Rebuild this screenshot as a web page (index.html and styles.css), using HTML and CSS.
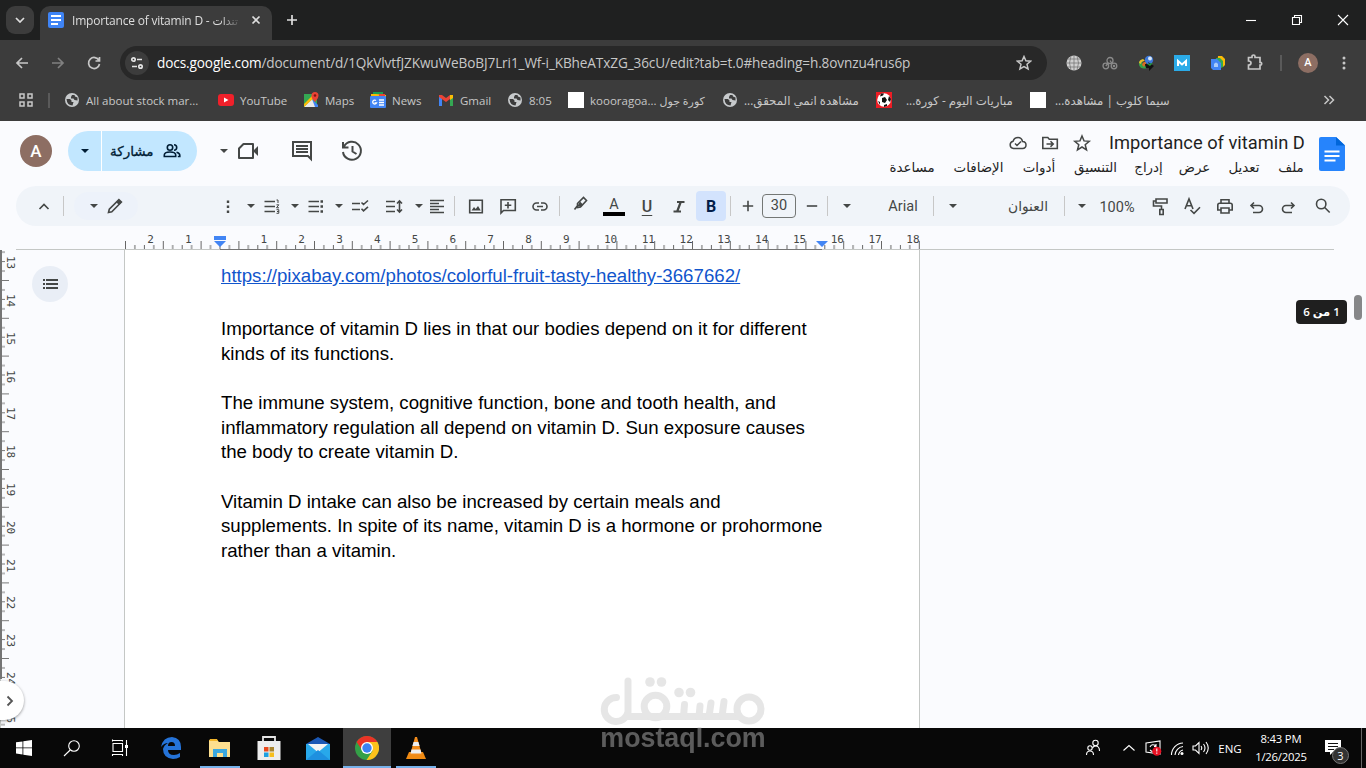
FILE: index.html
```html
<!DOCTYPE html>
<html lang="ar">
  <head>
    <meta charset="utf-8">
    <title>Importance of vitamin D</title>
    <link rel="stylesheet" href="styles.css">
  </head>

  <body>
    <!-- shared icons -->
    <svg class="defs" width="0" height="0">
      <symbol id="caret" viewBox="0 0 8 4"><path d="M0 0h8L4 4z" fill="currentColor"/></symbol>
      <symbol id="globe" viewBox="0 0 16 16"><circle cx="8" cy="8" r="7" fill="#c7cacc"/><path d="M2.500 7h3.500l1.500 1.500v1.500h2l-1 3.500Q3 13.500 2.500 7zM8 3h2.500l.5 1.500 2.500 1v3l-3-.5-1-1.500-2.500 0V5z" fill="#3c3c3c"/></symbol>
    </svg>

    <div class="tabstrip">
      <div class="tab-search"><svg width="10" height="6" viewBox="0 0 10 6"><path d="M1 1l4 4 4-4" class="s2"/></svg></div>
      <div class="tab">
        <svg width="16" height="16" viewBox="0 0 16 16"><rect width="16" height="16" rx="2" fill="#3f84f5"/><path d="M3 4h10M3 8h10M3 12h7" stroke="#fff" stroke-width="2"/></svg>
        <div class="tab-title">Importance of vitamin D - <span>تندات</span></div>
        <svg width="10" height="10" viewBox="0 0 10 10"><path d="M1.500 1.500l7 7M8.500 1.500l-7 7" class="s2"/></svg>
      </div>
      <svg class="new-tab" width="12" height="12" viewBox="0 0 12 12"><path d="M6 1v10M1 6h10" class="s2"/></svg>
      <div class="window-buttons">
        <svg width="46" height="40" viewBox="0 0 46 40"><path d="M18 20.500h10" class="s1"/></svg>
        <svg width="46" height="40" viewBox="0 0 46 40"><path d="M18.500 17.500h7v7h-7zM20.500 17v-1.500h7v7h-1.500" class="s1"/></svg>
        <svg width="46" height="40" viewBox="0 0 46 40"><path d="M18 15l10 10M28 15l-10 10" class="s1"/></svg>
      </div>
    </div>

    <div class="navbar">
      <svg class="m14" width="16" height="16" viewBox="0 0 16 16"><path d="M14 8H3M8 3L3 8l5 5" class="s2"/></svg>
      <svg class="m20 dim" width="16" height="16" viewBox="0 0 16 16"><path d="M2 8h11M8 3l5 5-5 5" class="s2"/></svg>
      <svg class="m20" width="16" height="16" viewBox="0 0 16 16"><path d="M13 5.500A5.500 5.500 0 1 0 13.500 9M13.500 2v4h-4" class="s2"/></svg>
      <div class="address">
        <div class="site-info"><svg width="14" height="14" viewBox="0 0 14 14"><path d="M7 3.500h5M2 10.500h5" class="s2"/><circle cx="3.500" cy="3.500" r="1.700" class="s2"/><circle cx="10.500" cy="10.500" r="1.700" class="s2"/></svg></div>
        <div class="url"><b>docs.google.com</b>/document/d/1QkVlvtfJZKwuWeBoBJ7Lri1_Wf-i_KBheATxZG_36cU/edit?tab=t.0#heading=h.8ovnzu4rus6p</div>
        <svg width="16" height="16" viewBox="0 0 16 16"><path d="M8 1.500l1.900 4.300 4.700.4-3.600 3.100 1.100 4.600L8 11.500l-4.100 2.400L5 9.300 1.400 6.200l4.700-.4z" class="s15"/></svg>
      </div>
      <div class="extensions">
        <svg width="16" height="16" viewBox="0 0 16 16"><circle cx="8" cy="8" r="7.500" fill="#d0d0d0"/><path d="M8 0v16M0 8h16M1.500 4h13M1.500 12h13M5 1q-3 7 0 14M11 1q3 7 0 14" fill="none" stroke="#777" stroke-width=".8"/></svg>
        <svg width="16" height="16" viewBox="0 0 16 16" fill="none" stroke="#8a8a8a" stroke-width="1.300"><circle cx="3.800" cy="11" r="2.800"/><circle cx="12" cy="11" r="2.800"/><circle cx="12" cy="11" r=".6"/><circle cx="8" cy="5.500" r="3"/><path d="M8 5.500l2 3M3.800 11l2.500-3"/></svg>
        <svg width="16" height="16" viewBox="0 0 16 16"><path d="M6 4Q0 5 1 10q2 5 8 3l-2-3q-4 0-2-4z" fill="#35a047"/><path d="M5 4q-4 1-4 4l2 1q0-3 4-3z" fill="#e8b82a"/><path d="M4 10q1-4 5-3l-3 5z" fill="#d66b24"/><circle cx="11" cy="5" r="4.200" fill="#3c78d8"/><circle cx="12" cy="3.500" r="2" fill="#d7e5f5"/><path d="M7 9h4l-1-2 6 4-5 5v-3H8z" fill="#111"/><path d="M9 9l6-1-3 3z" fill="#24963f"/></svg>
        <svg width="16" height="16" viewBox="0 0 16 16"><rect width="16" height="16" fill="#2babe8"/><path d="M4 11V6l4 3.500L12 6v5" fill="none" stroke="#fff" stroke-width="2"/></svg>
        <svg width="16" height="16" viewBox="0 0 16 16"><path d="M8 1h4l3 3v6l-2 2H7z" fill="#fbbc05"/><path d="M6 3h4l3 3v6l-2 1H5z" fill="#34a853"/><path d="M1 4h6l4 4v7H3l-2-2z" fill="#4285f4"/><path d="M4 9q2-3 4 0v3H4z" fill="#a9cbfa"/></svg>
        <svg width="18" height="18" viewBox="0 0 18 18"><path d="M2.500 4.500H6V3.500a1.500 1.500 0 0 1 3 0v1h5v5h1a1.500 1.500 0 0 1 0 2.500h-1v4H2.500v-4q2.500 0 2.500-2t-2.500-2z" fill="none" stroke="#c7c7c7" stroke-width="1.700" transform="translate(0 -1)"/></svg>
      </div>
      <i class="nav-divider"></i>
      <div class="avatar small">A</div>
      <svg class="kebab" width="4" height="16" viewBox="0 0 4 16" fill="#c7c7c7"><circle cx="2" cy="3" r="1.500"/><circle cx="2" cy="8" r="1.500"/><circle cx="2" cy="13" r="1.500"/></svg>
    </div>

    <div class="bookmarks">
      <svg class="apps" width="16" height="16" viewBox="0 0 16 16"><path d="M2 2h4v4H2zM10 2h4v4h-4zM2 10h4v4H2zM10 10h4v4h-4z" class="s15"/></svg>
      <i class="bar"></i>
      <div class="bm b1"><svg width="16" height="16"><use href="#globe"/></svg><span>All about stock mar...</span></div>
      <div class="bm b2"><svg width="16" height="16" viewBox="0 0 16 16"><rect y="2" width="16" height="12" rx="3" fill="#f0202a"/><path d="M6 5.500v5L10.500 8z" fill="#fff"/></svg><span>YouTube</span></div>
      <div class="bm b3"><svg width="16" height="16" viewBox="0 0 16 16"><path d="M1 2h13v13H1z" fill="#34a853"/><path d="M1 15L9 7l5 8z" fill="#e9e9e9"/><path d="M9 7l6 6v2h-3z" fill="#4285f4"/><path d="M1 12v3l11-10-2-2z" fill="#fbbc05"/><path d="M12 10Q8 6 8.500 3.500a3.500 3.500 0 0 1 7 0Q15.500 6 12 10z" fill="#ea4335"/><circle cx="12" cy="3.500" r="1.300" fill="#811411"/></svg><span>Maps</span></div>
      <div class="bm b4"><svg width="16" height="16" viewBox="0 0 16 16"><path d="M3 0h10v5H3z" fill="#1b9e54"/><path d="M1 2h5l10 1v4H1z" fill="#fbbc05"/><path d="M9 2h6v3H9z" fill="#ea4335"/><rect y="4" width="16" height="12" rx="1" fill="#4285f4"/><path d="M6 8.500A2 2 0 1 0 6.500 11H4.500M9 8h5M9 10.500h5M9 13h5" fill="none" stroke="#fff" stroke-width="1.300"/></svg><span>News</span></div>
      <div class="bm b5"><svg width="16" height="16" viewBox="0 0 16 16"><path d="M1 4h3v10H1z" fill="#4285f4"/><path d="M12 4h3v10h-3z" fill="#34a853"/><path d="M12 3h3v3l-3 2z" fill="#fbbc05"/><path d="M1 3l3 0 4 3 4-3v4L8 10 1 5z" fill="#ea4335"/></svg><span>Gmail</span></div>
      <div class="bm b6"><svg width="16" height="16"><use href="#globe"/></svg><span>8:05</span></div>
      <div class="bm b7"><i class="blank"></i><span>koooragoa... <em>كورة جول</em></span></div>
      <div class="bm b8"><svg width="16" height="16"><use href="#globe"/></svg><span class="ar" dir="rtl">مشاهدة انمي المحقق...</span></div>
      <div class="bm b9"><svg width="16" height="16" viewBox="0 0 16 16"><path d="M0 0h16v16H0z" fill="#ed1c24"/><circle cx="8" cy="8" r="6.800" fill="#fff"/><path d="M6 6l3-1 2 3-2 3-3-1zM5 1.500l3 0-1 2-3 1zM13 4l2 3-1 3-2-2zM2 9l2 1 0 3zM8 13l3-1 0 2-3 1z" fill="#111"/></svg><span class="ar" dir="rtl">مباريات اليوم - كورة...</span></div>
      <div class="bm b10"><i class="blank"></i><span class="ar" dir="rtl">سيما كلوب | مشاهدة...</span></div>
      <svg class="more" width="12" height="10" viewBox="0 0 12 10"><path d="M1.500 1l4 4-4 4M6.500 1l4 4-4 4" class="s15"/></svg>
    </div>

    <div class="docs">
      <div class="docs-header">
        <div class="avatar">A</div>
        <div class="share">
          <div class="share-more"><svg width="8" height="4"><use href="#caret"/></svg></div>
          <div class="share-main">
            <span>مشاركة</span>
            <svg width="20" height="20" viewBox="0 0 20 20" fill="none" stroke="currentColor" stroke-width="1.600"><circle cx="8" cy="6.500" r="2.700"/><path d="M2.300 15.500v-1.500q0-3 5.700-3t5.700 3v1.500zM12 3.800a2.700 2.700 0 0 1 0 5.400M14.500 11.300q3.300.8 3.300 3v1.200h-2"/></svg>
          </div>
        </div>
        <svg class="m23" width="8" height="4"><use href="#caret"/></svg>
        <svg class="m8" width="24" height="24" viewBox="0 0 24 24"><path d="M7.500 5H17v14H3V9.500z" fill="none" stroke="currentColor" stroke-width="2" stroke-linejoin="round"/><path d="M17 12l5-5v10z" fill="currentColor"/></svg>
        <svg class="m30" width="24" height="24" viewBox="0 0 24 24"><path d="M3 3h18v17l-3-3H3zM6 7h12M6 10h12M6 13h12" fill="none" stroke="currentColor" stroke-width="2"/></svg>
        <svg class="m26" width="24" height="24" viewBox="0 0 24 24"><path d="M4 7.500a9 9 0 1 1-1 5.500M3 3v5.500h5.500M12.500 7v5.500l4 2.500" fill="none" stroke="currentColor" stroke-width="2"/></svg>

        <div class="doc-info">
          <div class="doc-name">
            <svg width="20" height="20" viewBox="0 0 20 20"><path d="M5.500 15.500a3.700 3.700 0 0 1-.4-7.300Q6.300 4.500 10 4.500t4.500 4q3.500.2 3.500 3.500t-3.500 3.500zM7 10.500l2 2 4-4" fill="none" stroke="currentColor" stroke-width="1.500"/></svg>
            <svg width="20" height="20" viewBox="0 0 20 20"><path d="M2.800 15.500v-11h5l1.500 1.700h8v9.300zM6.500 11h6M10.500 8.300l2.700 2.700-2.700 2.700" fill="none" stroke="currentColor" stroke-width="1.600"/></svg>
            <svg width="20" height="20" viewBox="0 0 20 20"><path d="M10 3l2 4.900 5.200.4-4 3.400 1.300 5.100L10 14l-4.500 2.800 1.300-5.100-4-3.400L8 7.900z" fill="none" stroke="currentColor" stroke-width="1.500"/></svg>
            <h1>Importance of vitamin D</h1>
          </div>
          <div class="menus" dir="rtl">
            <span class="w26">ملف</span>
            <span class="w34">تعديل</span>
            <span class="w31">عرض</span>
            <span class="w27">إدراج</span>
            <span class="w45">التنسيق</span>
            <span class="w34">أدوات</span>
            <span class="w53">الإضافات</span>
            <span class="w46">مساعدة</span>
          </div>
        </div>
        <svg class="docs-logo" width="26" height="34" viewBox="0 0 26 34"><path d="M2 0h15l9 8.500V32a2 2 0 0 1-2 2H2a2 2 0 0 1-2-2V2a2 2 0 0 1 2-2z" fill="#2684fc"/><path d="M17 0l9 8.500h-9z" fill="#0066da"/><path d="M5.500 14.500h15M5.500 19h15M5.500 23.500h11" stroke="#fff" stroke-width="1.800"/></svg>
      </div>

      <div class="toolbar">
        <svg class="m18" width="20" height="20" viewBox="0 0 20 20"><path d="M5.500 13l4.500-4.500 4.500 4.500" class="t2"/></svg>
        <i class="sep m9"></i>
        <div class="mode m10">
          <svg width="8" height="4"><use href="#caret"/></svg>
          <svg class="m7" width="20" height="20" viewBox="0 0 20 20"><path d="M3.500 16.500l.8-3.300 9.600-9.600 2.500 2.500-9.600 9.600z" class="t2"/><path d="M11 6l2.500-2.500 3 3L14 9z" fill="currentColor"/></svg>
        </div>
        <svg class="m80" width="20" height="20" viewBox="0 0 20 20" fill="currentColor"><path d="M8.800 4.500h2.400v2.400H8.800zM8.800 9.500h2.400v2.400H8.800zM8.800 14.500h2.400v2.400H8.800z"/></svg>
        <svg class="m9" width="8" height="4"><use href="#caret"/></svg>
        <svg class="m7" width="20" height="20" viewBox="0 0 20 20"><path d="M2.500 5.500H13M2.500 10.500H13M2.500 15.500H13" class="t2"/><path d="M14.500 4h1.500v3M14.500 8.800h2.300l-2.300 3h2.500M14.500 13.700h2.300v3.600h-2.300M15 15.500h1.800" class="t1"/></svg>
        <svg class="m9" width="8" height="4"><use href="#caret"/></svg>
        <svg class="m7" width="20" height="20" viewBox="0 0 20 20"><path d="M2.500 5.500H13M2.500 10.500H13M2.500 15.500H13" class="t2"/><path d="M14.500 4.200H17v2.500h-2.500zM14.500 9.200H17v2.500h-2.500zM14.500 14.200H17v2.500h-2.500z" fill="currentColor"/></svg>
        <svg class="m9" width="8" height="4"><use href="#caret"/></svg>
        <svg class="m7" width="20" height="20" viewBox="0 0 20 20"><path d="M2 7.500h8M2 13.500h8M11.500 6.500l2 2 4.500-4M11.500 12.800l2 2 4.500-4" class="t2"/></svg>
        <svg class="m14" width="20" height="20" viewBox="0 0 20 20"><path d="M2 5.500h9M2 10.500h9M2 15.500h9M15.500 6v9M13 7.500L15.500 5 18 7.500M13 13.500l2.500 2.500 2.500-2.500" class="t2"/></svg>
        <svg class="m11" width="8" height="4"><use href="#caret"/></svg>
        <svg class="m4" width="20" height="20" viewBox="0 0 20 20"><path d="M3 4.500h14M3 7.500h9M3 10.500h14M3 13.500h9M3 16.500h14" class="t2"/></svg>
        <i class="sep m7"></i>
        <svg class="m11" width="20" height="20" viewBox="0 0 20 20"><path d="M3.700 4.200h12.600v12.600H3.700z" class="t2"/><path d="M5.500 14.500l2.500-3.500 1.700 2 2.300-3 2.800 4.500z" fill="currentColor"/></svg>
        <svg class="m12" width="20" height="20" viewBox="0 0 20 20"><path d="M3 17V3.800h14.300v10.700H5.500zM10 6v6.500M6.800 9.200h6.500" class="t2"/></svg>
        <svg class="m12" width="20" height="20" viewBox="0 0 20 20"><path d="M9 14H6.500a3.500 3.500 0 0 1 0-7H9M11 7h2.500a3.500 3.500 0 0 1 0 7H11M7 10.500h6" class="t2"/></svg>
        <i class="sep m9"></i>
        <svg class="m10 lift" width="20" height="20" viewBox="0 0 20 20"><path d="M7.500 9.500l6-6 3 3-6 6.500-3 .5zM8 11l-3.500 4.500" class="t2"/><path d="M10 7.500l3 3-2.500 2.500-3-1z" fill="currentColor"/></svg>
        <span class="text-color m13">A</span>
        <span class="under m12">U</span>
        <svg class="m12" width="20" height="20" viewBox="0 0 20 20"><path d="M8 6h7.500M4.500 15.500H12M11.700 6l-3.500 9.500" fill="none" stroke="currentColor" stroke-width="2.200"/></svg>
        <span class="bold m7">B</span>
        <i class="sep m4"></i>
        <svg class="m7" width="20" height="20" viewBox="0 0 20 20"><path d="M10 4.800v10.400M4.800 10h10.400" class="t2"/></svg>
        <span class="font-size m4">30</span>
        <svg class="m6" width="20" height="20" viewBox="0 0 20 20"><path d="M4.800 10h10.400" class="t2"/></svg>
        <i class="sep m5"></i>
        <svg class="m15" width="8" height="4"><use href="#caret"/></svg>
        <span class="font-name m29">Arial</span>
        <i class="sep m7"></i>
        <svg class="m15" width="8" height="4"><use href="#caret"/></svg>
        <span class="style-name m46">العنوان</span>
        <i class="sep m11"></i>
        <svg class="m13" width="8" height="4"><use href="#caret"/></svg>
        <span class="zoom m9">100%</span>
        <svg class="m11" width="20" height="20" viewBox="0 0 20 20"><path d="M6 3h11v4H6zM6 5H3.500v5H11.500v3M9.800 13.500h3.400v5H9.800z" class="t2"/></svg>
        <svg class="m12" width="20" height="20" viewBox="0 0 20 20"><path d="M3 13l4-10 4 10M4.500 9.700h5M8.500 14l3.500 3.300 6-6" class="t2"/></svg>
        <svg class="m13" width="20" height="20" viewBox="0 0 20 20"><path d="M6 7V3.800h8V7M5.500 14H2.800V9q0-1.800 1.800-1.800h10.800q1.800 0 1.800 1.800v5h-2.700M6 12h8v5H6z" class="t2"/></svg>
        <svg class="m12" width="20" height="20" viewBox="0 0 20 20"><path d="M7 5.500L4 8.500l3 3M4.500 8.500h7.500a3.500 3.500 0 0 1 0 7H6" class="t2" transform="translate(0 1)"/></svg>
        <svg class="m11" width="20" height="20" viewBox="0 0 20 20"><path d="M13 5.500l3 3-3 3M15.500 8.500H8a3.500 3.500 0 0 0 0 7h6" class="t2" transform="translate(0 1)"/></svg>
        <svg class="m15" width="20" height="20" viewBox="0 0 20 20"><circle cx="8.200" cy="8" r="4.700" class="t2"/><path d="M11.700 11.500l5 5" class="t2"/></svg>
      </div>

      <div class="ruler">
        <div class="ruler-labels">
          <span>2</span><span>1</span><span></span><span>1</span><span>2</span><span>3</span><span>4</span><span>5</span><span>6</span><span>7</span><span>8</span><span>9</span><span class="two">10</span><span class="two">11</span><span class="two">12</span><span class="two">13</span><span class="two">14</span><span class="two">15</span><span class="two">16</span><span class="two">17</span><span class="two">18</span>
        </div>
        <svg class="ruler-ticks" width="1366" height="25" viewBox="0 0 1366 25">
          <defs>
            <pattern id="hticks" x="125" y="0" width="37.800" height="25" patternUnits="userSpaceOnUse">
              <path d="M.5 15v9M9.900 19v5M19.400 19v5M28.800 19v5" stroke="#666" stroke-width="1"/>
            </pattern>
          </defs>
          <rect x="125" y="0" width="795" height="25" fill="url(#hticks)"/>
          <path d="M16 23.500h1318" stroke="#c4c7c5"/>
          <path d="M220 23.500h602" stroke="#757575"/>
          <path d="M214 10h12v4h-12zM214 15h12l-6 6zM816 15h12l-6 6z" fill="#4285f4"/>
        </svg>
      </div>

      <div class="editor">
        <div class="vruler">
          <svg width="10" height="480" viewBox="0 0 10 480">
            <defs>
              <pattern id="vticks" x="0" y="30" width="10" height="37.800" patternUnits="userSpaceOnUse">
                <path d="M0 .5h9M0 9.900h5M0 19.400h5M0 28.800h5" stroke="#777" stroke-width="1"/>
              </pattern>
            </defs>
            <rect width="10" height="480" fill="url(#vticks)"/>
            <path d="M1 0v429" stroke="#757575" stroke-width="2"/>
            <path d="M.5 429v51" stroke="#c4c7c5"/>
          </svg>
          <div class="vlabels">
            <span>13</span><span>14</span><span>15</span><span>16</span><span>17</span><span>18</span><span>19</span><span>20</span><span>21</span><span>22</span><span>23</span><span>24</span><span>25</span>
          </div>
        </div>
        <div class="outline">
          <div class="outline-btn"><svg width="16" height="10" viewBox="0 0 16 10"><path d="M4 1h12M4 5h12M4 9h12M1 1h2M1 5h2M1 9h2" stroke="#444746" stroke-width="1.800"/></svg></div>
        </div>
        <div class="page">
          <p><a>https://pixabay.com/photos/colorful-fruit-tasty-healthy-3667662/</a></p>
          <p>Importance of vitamin D lies in that our bodies depend on it for different<br>kinds of its functions.</p>
          <p>The immune system, cognitive function, bone and tooth health, and<br>inflammatory regulation all depend on vitamin D. Sun exposure causes<br>the body to create vitamin D.</p>
          <p>Vitamin D intake can also be increased by certain meals and<br>supplements. In spite of its name, vitamin D is a hormone or prohormone<br>rather than a vitamin.</p>
        </div>
        <div class="page-count" dir="rtl">1 من 6</div>
        <div class="scroll-thumb"></div>
        <div class="expand"><svg width="8" height="12" viewBox="0 0 8 12"><path d="M1.500 1.500L6 6l-4.500 4.500" fill="none" stroke="#555" stroke-width="1.800"/></svg></div>
      </div>
    </div>

    <div class="taskbar">
      <div class="task"><svg width="16" height="16" viewBox="0 0 16 16"><path d="M0 2.300L6.500 1.400v6.100H0zM7.300 1.300L16 0v7.500H7.300zM0 8.300h6.500v6.200L0 13.600zM7.300 8.300H16V16l-8.700-1.300z" fill="#fff"/></svg></div>
      <div class="task"><svg width="18" height="18" viewBox="0 0 18 18"><circle cx="11" cy="7" r="5.300" class="s1"/><path d="M7.200 11L1 17" class="s1"/></svg></div>
      <div class="task"><svg width="18" height="18" viewBox="0 0 18 18"><path d="M2 4.500h9.500v8H2zM1.500 2V.5M11.500 2.500v-1h-10v1M1.500 17v-1.500h10V17M15.500 1v16" class="s1"/><path d="M14 6h3v3h-3z" fill="#fff"/></svg></div>
      <div class="task gap3"><svg width="20" height="22" viewBox="0 0 20 22"><path d="M0 10Q2 0 11 0q9 1 9 10v3H7q0 5 6 5 3 0 6-2v4q-3 2-7 2Q2 21 2 12q1-4 5-6Q3 6 0 10zM7 9h7q0-4-3.500-4T7 9z" fill="#2573d8" fill-rule="evenodd"/></svg></div>
      <div class="task open"><svg width="22" height="19" viewBox="0 0 22 19"><path d="M0 1h8l2 2h11v15H0z" fill="#fddf8f"/><path d="M1 0h7l1 2H0z" fill="#f3b62b"/><path d="M4 18v-8h14v8h-4v-4H8v4z" fill="#3ba8e0"/></svg></div>
      <div class="task"><svg width="24" height="24" viewBox="0 0 24 24"><path d="M6 6V1h12v5" fill="none" stroke="#e4e4e4" stroke-width="1.800"/><path d="M.5 5h23v19H.5z" fill="#ededed"/><path d="M7 11h4.500v4.500H7z" fill="#e8481c"/><path d="M12.500 11H17v4.500h-4.500z" fill="#a9852e"/><path d="M7 16.500h4.500V21H7z" fill="#1d9fe0"/><path d="M12.500 16.500H17V21h-4.500z" fill="#f7bf1c"/></svg></div>
      <div class="task"><svg width="24" height="23" viewBox="0 0 24 23"><path d="M0 7l12-7 12 7v6H0z" fill="#1b58b5"/><path d="M0 7h24v16H0z" fill="#28a8ea"/><path d="M2 7h20l-9 7.500h-2z" fill="#f4f4f4"/><path d="M0 7h2l10 8 10-8h2" fill="none"/><path d="M0 23l12-10 12 10z" fill="#1e90df"/></svg></div>
      <div class="task open active"><svg width="24" height="24" viewBox="0 0 24 24"><circle cx="12" cy="12" r="12" fill="#34a047"/><path d="M1.600 6A12 12 0 0 1 22.400 6H12L7 14z" fill="#ea3326"/><path d="M22.400 6A12 12 0 0 1 11.500 24l6-9L12 6z" fill="#fcc21b"/><circle cx="12" cy="12" r="6" fill="#fff"/><circle cx="12" cy="12" r="4.700" fill="#3b82f3"/></svg></div>
      <div class="task open"><svg width="20" height="23" viewBox="0 0 20 23"><path d="M3 15h14l3 7H0z" fill="#f08a12"/><path d="M9 0h2l5 18H4z" fill="#f28c1c"/><path d="M7.600 5h4.800l1.200 4H6.400zM5.500 12.500h9l1 4h-11z" fill="#eee"/></svg></div>
      <div class="tray">
        <svg width="16" height="18" viewBox="0 0 16 18"><circle cx="10.500" cy="4" r="2.700" class="s1"/><circle cx="5" cy="9" r="2.200" class="s1"/><path d="M1.500 16q0-4 3.500-4t3.500 4M7.500 9q1-2 3-2 4 0 4 5" class="s1"/></svg>
        <svg class="m22" width="12" height="8" viewBox="0 0 12 8"><path d="M.5 6.500L6 1.500l5.500 5" class="s1"/></svg>
        <svg class="m10" width="17" height="16" viewBox="0 0 17 16"><path d="M1 3l14-2v13l-14-2zM5 7q2-4 6-1M5 10q3 3 5 0M11 4v2.500H9" class="s1"/><circle cx="11.800" cy="11.200" r="4.500" fill="#e81123"/><path d="M11.800 8.500v3M11.800 12.500v1.200" class="s1"/></svg>
        <svg class="m8" width="16" height="16" viewBox="0 0 16 16"><path d="M1.500 15A12 12 0 0 1 13 3M5 15a9 9 0 0 1 8-8.500M8.500 15a6 6 0 0 1 4.500-5" class="s1"/><circle cx="12" cy="13.500" r="1.500" fill="#fff"/></svg>
        <svg class="m6" width="18" height="14" viewBox="0 0 18 14"><path d="M1 5h2.500L7 1.500v11L3.500 9H1zM9 5q1.500 2 0 4M11.500 3q3 4 0 8M14 1q4.500 6 0 12" class="s1"/></svg>
        <span class="lang">ENG</span>
        <div class="clock"><span>8:43 PM</span><span>1/26/2025</span></div>
        <div class="action"><svg width="16" height="16" viewBox="0 0 16 16"><path d="M0 0h16v12H8l-3 3v-3H0z" fill="#fff"/><path d="M3 3.500h10M3 6.500h10M3 9.500h6" stroke="#111"/></svg><b>3</b></div>
        <i class="show-desktop"></i>
      </div>
    </div>

    <div class="watermark">
      <svg width="166" height="50" viewBox="0 0 166 50">
        <g fill="none" stroke="#c7c7c7" stroke-width="7" stroke-linecap="round" stroke-linejoin="round">
          <path d="M16.500 20.500A12 12 0 1 0 28 35V4M28.500 39.500H139"/>
          <circle cx="55.500" cy="29.500" r="11.300"/>
          <circle cx="149" cy="32" r="12"/>
          <path d="M83.500 39.500l1-12M99 39.500l1-10.500M109 39.500l2-13.500M122 39.500l2-15"/>
        </g>
        <g fill="#c7c7c7"><circle cx="50" cy="5" r="4.800"/><circle cx="61.500" cy="5" r="4.800"/><circle cx="79" cy="15.500" r="4.800"/><circle cx="90.500" cy="15.500" r="4.800"/></g>
      </svg>
      <div class="watermark-name">mostaql.com</div>
    </div>
  </body>
</html>
```
FILE: styles.css
```css
* {
  box-sizing: border-box;
}

body {
  margin: 0;
  width: 1366px;
  height: 768px;
  overflow: hidden;
  display: flex;
  flex-direction: column;
  position: relative;
  font-family: "Open Sans", "Noto Sans", "DejaVu Sans", sans-serif;
  font-size: 12px;
  background: #3c3c3c;
}

svg {
  display: block;
  flex: none;
}

.defs { position: absolute; }

/* stroke helpers */
.s1 { fill: none; stroke: #fff; stroke-width: 1.1; }
.s15 { fill: none; stroke: #c7c7c7; stroke-width: 1.5; }
.s2 { fill: none; stroke: currentColor; stroke-width: 1.7; }
.t1 { fill: none; stroke: currentColor; stroke-width: 1; }
.t2 { fill: none; stroke: currentColor; stroke-width: 1.6; }

/* spacing helpers */
.m4 { margin-left: 4px; }
.m5 { margin-left: 5px; }
.m6 { margin-left: 6px; }
.m7 { margin-left: 7px; }
.m8 { margin-left: 8px; }
.m9 { margin-left: 9px; }
.m10 { margin-left: 10px; }
.m11 { margin-left: 11px; }
.m12 { margin-left: 12px; }
.m13 { margin-left: 13px; }
.m14 { margin-left: 14px; }
.m15 { margin-left: 15px; }
.m18 { margin-left: 18px; }
.m20 { margin-left: 20px; }
.m22 { margin-left: 22px; }
.m23 { margin-left: 23px; }
.m26 { margin-left: 26px; }
.m29 { margin-left: 29px; }
.m30 { margin-left: 30px; }
.m46 { margin-left: 46px; }
.m80 { margin-left: 80px; }

/* Browser tabs */
.tabstrip {
  flex: none;
  height: 40px;
  display: flex;
  align-items: center;
  padding-left: 6px;
  background: #1f2020;
  color: #dedede;
}

.tab-search {
  width: 28px;
  height: 28px;
  border-radius: 9px;
  background: #3c3c3c;
  display: flex;
  align-items: center;
  justify-content: center;
}

.tab {
  align-self: flex-end;
  width: 232px;
  height: 34px;
  margin-left: 6px;
  padding: 0 0 6px 8px;
  display: flex;
  align-items: center;
  border-radius: 10px 10px 0 0;
  background: #3c3c3c;
}

.tab-title {
  flex: none;
  width: 172px;
  margin: 0 7px 0 8px;
  white-space: nowrap;
  font-size: 12px;
  letter-spacing: -0.2px;
  mask-image: linear-gradient(90deg, #000 148px, transparent 170px);
}

.tab-title span {
  font-size: 11px;
  letter-spacing: 0;
}

.new-tab { margin-left: 14px; }

.window-buttons {
  display: flex;
  margin-left: auto;
}

/* Address row */
.navbar {
  flex: none;
  height: 45px;
  display: flex;
  align-items: center;
  color: #c7c7c7;
}

.dim { color: #808080; }

.address {
  width: 927px;
  height: 34px;
  margin-left: 18px;
  padding: 0 15px 0 5px;
  display: flex;
  align-items: center;
  border-radius: 17px;
  background: #282828;
}

.site-info {
  width: 24px;
  height: 24px;
  border-radius: 50%;
  background: #3c3c3c;
  display: flex;
  align-items: center;
  justify-content: center;
  color: #e3e3e3;
}

.url {
  flex: 1;
  margin-left: 8px;
  font-size: 13.6px;
  letter-spacing: -0.11px;
  white-space: nowrap;
}

.url b {
  font-weight: 400;
  color: #fff;
}

.extensions {
  display: flex;
  align-items: center;
  gap: 20px;
  margin-left: 19px;
}

.nav-divider {
  width: 2px;
  height: 16px;
  margin-left: 16px;
  background: #5a5a5a;
}

.avatar {
  width: 32px;
  height: 32px;
  border-radius: 50%;
  display: flex;
  align-items: center;
  justify-content: center;
  font-family: Roboto, sans-serif;
  font-size: 17px;
  font-weight: 500;
  color: #fff;
  background: #8d6e63;
}

.avatar.small {
  width: 20px;
  height: 20px;
  margin-left: 16px;
  font-size: 11px;
}

.kebab { margin-left: 24px; }

/* Bookmarks */
.bookmarks {
  flex: none;
  height: 36px;
  padding-bottom: 6px;
  display: flex;
  align-items: center;
  color: #c7c7c7;
}

.apps { margin-left: 18px; }

.bar {
  width: 2px;
  height: 15px;
  margin: 0 14px 0 14px;
  background: #5a5a5a;
}

.bm {
  flex: none;
  display: flex;
  align-items: center;
  gap: 6px;
  white-space: nowrap;
}

.bm span { font-size: 11.5px; }
.bm em { font-style: normal; font-size: 11px; }
.bm .ar { font-size: 11.8px; }

.b1 { width: 154px; }
.b2 { width: 85px; }
.b3 { width: 67px; }
.b4 { width: 68px; }
.b5 { width: 69px; }
.b6 { width: 61px; }
.b7 { width: 154px; }
.b8 { width: 154px; }
.b9 { width: 154px; gap: 14px; }
.b10 { width: 150px; gap: 9px; }

.blank {
  width: 16px;
  height: 16px;
  background: #fff;
}

.more { margin: 0 31px 0 auto; }

/* Docs */
.docs {
  flex: none;
  height: 607px;
  display: flex;
  flex-direction: column;
  background: #fafbfe;
  color: #444746;
}

.docs-header {
  height: 65px;
  padding: 0 21px 5px 20px;
  display: flex;
  align-items: center;
  flex: none;
}

.share {
  width: 129px;
  height: 40px;
  margin-left: 16px;
  display: flex;
  border-radius: 20px;
  background: #c2e7ff;
  color: #001d35;
}

.share-more {
  width: 34px;
  display: flex;
  align-items: center;
  justify-content: center;
  border-right: 1px solid #fff;
}

.share-main {
  flex: 1;
  padding: 0 15px 0 8px;
  display: flex;
  align-items: center;
  justify-content: space-between;
  font-size: 13.5px;
  -webkit-text-stroke: 0.3px #001d35;
}

.doc-info {
  margin-left: auto;
  padding-top: 6px;
  display: flex;
  flex-direction: column;
  align-items: flex-end;
}

.doc-name {
  height: 25px;
  display: flex;
  align-items: center;
  gap: 12px;
}

.doc-name h1 {
  width: 196px;
  margin: 0 0 0 5px;
  font: 400 18.3px Roboto, sans-serif;
  color: #1f1f1f;
  white-space: nowrap;
}

.menus {
  height: 23px;
  padding-right: 1px;
  display: flex;
  align-items: center;
  gap: 17px;
  font-size: 13.4px;
  color: #1f1f1f;
}

.menus span {
  display: flex;
  justify-content: center;
  white-space: nowrap;
}

.w26 { width: 26px; }
.w27 { width: 27px; }
.w31 { width: 31px; }
.w34 { width: 34px; }
.w45 { width: 45px; }
.w46 { width: 46px; }
.w53 { width: 53px; }

.docs-logo { margin: 6px 0 0 14px; }

.toolbar {
  flex: none;
  height: 40px;
  margin: 0 16px;
  display: flex;
  align-items: center;
  border-radius: 20px;
  background: #f0f4f9;
  font-family: Roboto, "DejaVu Sans", sans-serif;
  font-size: 14.5px;
}

.sep {
  flex: none;
  width: 1px;
  height: 20px;
  background: #c7c7c7;
}

.mode {
  width: 64px;
  height: 28px;
  padding-left: 16px;
  display: flex;
  align-items: center;
  border-radius: 14px;
  background: #edf2fa;
}

.toolbar span {
  flex: none;
  text-align: center;
  white-space: nowrap;
}

.lift { margin-bottom: 4px; }

.toolbar .text-color {
  width: 22px;
  height: 20px;
  line-height: 17px;
  border-bottom: 4px solid #000;
}

.toolbar .under {
  width: 20px;
  font-size: 16px;
  font-weight: 500;
  text-decoration: underline;
  text-underline-offset: 3px;
}

.toolbar .bold {
  width: 30px;
  height: 30px;
  line-height: 31px;
  border-radius: 4px;
  background: #d3e3fd;
  color: #041e49;
  font-size: 16px;
  font-weight: 700;
}

.toolbar .font-size {
  width: 34px;
  height: 24px;
  line-height: 22px;
  border: 1px solid #747775;
  border-radius: 4px;
}

.toolbar .font-name { width: 46px; }
.toolbar .style-name { width: 50px; font-size: 13.8px; }
.toolbar .zoom { width: 44px; padding-top: 2px; }

/* Rulers */
.ruler {
  flex: none;
  height: 24px;
  position: relative;
}

.ruler-labels {
  display: flex;
  padding-left: 131.6px;
  height: 24px;
  padding-top: 7px;
}

.ruler-labels span {
  flex: none;
  width: 37.8px;
  text-align: center;
  font: 11px/13px "DejaVu Sans Mono", Roboto, monospace;
}

.ruler-labels .two { padding-left: 13px; }

.ruler-ticks {
  position: absolute;
  left: 0;
  top: 0;
  z-index: 1;
}

.editor {
  flex: 1;
  min-height: 0;
  display: flex;
  position: relative;
  overflow: hidden;
}

.vruler {
  width: 32px;
  display: flex;
}

.vlabels {
  margin: -6px 0 0 -7px;
  display: flex;
  flex-direction: column;
}

.vlabels span {
  flex: none;
  height: 37.8px;
  width: 14px;
  writing-mode: vertical-rl;
  text-align: center;
  font: 11px/14px "DejaVu Sans Mono", Roboto, monospace;
}

.outline { width: 92px; }

.outline-btn {
  width: 36px;
  height: 36px;
  margin-top: 16px;
  border-radius: 50%;
  background: #e9eef6;
  display: flex;
  align-items: center;
  justify-content: center;
}

.page {
  width: 796px;
  padding: 14px 0 0 96px;
  border-left: 1px solid #c4c7c5;
  border-right: 1px solid #c4c7c5;
  background: #fff;
  font: 18.67px/24.7px "Liberation Sans", Arial, sans-serif;
  color: #000;
}

.page p {
  margin: 0 0 24.7px;
  white-space: nowrap;
}

.page p:first-child { margin-bottom: 28.2px; }

.page a {
  color: #1155cc;
  text-decoration: underline;
}

.page-count {
  width: 51px;
  height: 24px;
  margin: 50px 7px 0 auto;
  border-radius: 4px;
  background: #1f1f1f;
  color: #fff;
  font-size: 11.5px;
  font-weight: 600;
  line-height: 23px;
  text-align: center;
}

.scroll-thumb {
  width: 8px;
  height: 25px;
  margin: 45px 4px 0 0;
  border-radius: 4px;
  background: #868789;
}

/* collapsed side panel handle, floats over the ruler */
.expand {
  position: absolute;
  left: -20px;
  bottom: 8px;
  width: 44px;
  height: 39px;
  padding-left: 26px;
  display: flex;
  align-items: center;
  border-radius: 20px;
  background: #fff;
  box-shadow: 0 1px 3px rgba(0, 0, 0, 0.4);
}

/* Windows taskbar */
.taskbar {
  flex: none;
  height: 40px;
  display: flex;
  background: #080808;
  color: #fff;
}

.task {
  width: 48px;
  display: flex;
  align-items: center;
  justify-content: center;
  background-repeat: no-repeat;
}

.task:nth-child(n+5) { margin-left: 1px; }
.gap3 { margin-left: 3px; }

.open {
  background-image: linear-gradient(#76b1ea, #76b1ea);
  background-size: 40px 2px;
  background-position: 4px 100%;
}

.active {
  background-color: #3e3e3e;
  background-size: 48px 2px;
  background-position: 0 100%;
}

.tray {
  margin-left: auto;
  display: flex;
  align-items: center;
}

.lang {
  width: 28px;
  margin-left: 6px;
  text-align: center;
  font-size: 11.5px;
}

.clock {
  width: 60px;
  margin-left: 7px;
  display: flex;
  flex-direction: column;
  align-items: center;
  font-size: 11.3px;
  line-height: 18px;
  letter-spacing: -0.2px;
}

.action {
  position: relative;
  margin-left: 14px;
  width: 16px;
}

.action b {
  position: absolute;
  left: 7px;
  top: 7px;
  width: 17px;
  height: 17px;
  border: 1px solid #777;
  border-radius: 50%;
  background: #333;
  font-size: 11px;
  font-weight: 400;
  line-height: 15px;
  text-align: center;
}

.show-desktop {
  width: 1px;
  height: 40px;
  margin: 0 4px 0 20px;
  background: #666;
}

/* Watermark across the page bottom and the taskbar */
.watermark {
  position: absolute;
  left: 600px;
  top: 677px;
  width: 166px;
  opacity: 0.44;
}

.watermark-name {
  margin-top: -4px;
  font: 700 26.8px/30px "Liberation Sans", Arial, sans-serif;
  color: #c7c7c7;
  text-align: center;
}
```
